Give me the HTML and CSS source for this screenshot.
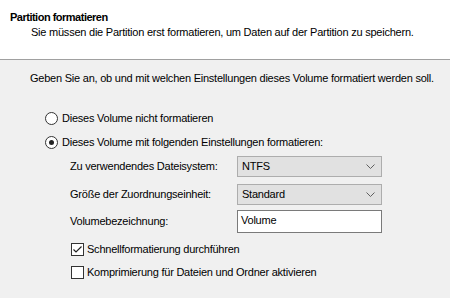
FILE: index.html
```html
<!DOCTYPE html>
<html lang="de">
<head>
<meta charset="UTF-8">
<title>Partition formatieren</title>
<link rel="stylesheet" href="styles.css">
</head>
<body>
<div class="header">
    <div class="title">Partition formatieren</div>
    <div class="subtitle">Sie müssen die Partition erst formatieren, um Daten auf der Partition zu speichern.</div>
</div>
<div class="page">
    <p class="intro">Geben Sie an, ob und mit welchen Einstellungen dieses Volume formatiert werden soll.</p>

    <div class="options">
        <label class="option">
            <span class="radio"></span>
            <span>Dieses Volume nicht formatieren</span>
        </label>
        <label class="option">
            <span class="radio checked"></span>
            <span>Dieses Volume mit folgenden Einstellungen formatieren:</span>
        </label>
    </div>

    <div class="settings">
        <div class="field">
            <span class="label">Zu verwendendes Dateisystem:</span>
            <div class="combo">
                <span>NTFS</span>
                <svg width="9" height="5" viewBox="0 0 9 5"><path d="M0.5 0.5 L4.5 4.5 L8.5 0.5" fill="none" stroke="#606060" stroke-width="1"/></svg>
            </div>
        </div>
        <div class="field">
            <span class="label">Größe der Zuordnungseinheit:</span>
            <div class="combo">
                <span>Standard</span>
                <svg width="9" height="5" viewBox="0 0 9 5"><path d="M0.5 0.5 L4.5 4.5 L8.5 0.5" fill="none" stroke="#606060" stroke-width="1"/></svg>
            </div>
        </div>
        <div class="field">
            <span class="label">Volumebezeichnung:</span>
            <div class="textbox">Volume</div>
        </div>

        <div class="checks">
            <label class="check">
                <span class="box">
                    <svg width="11" height="11" viewBox="0 0 11 11"><path d="M1.5 5.5 L4 8 L9.5 2.5" fill="none" stroke="#222" stroke-width="1.2"/></svg>
                </span>
                <span>Schnellformatierung durchführen</span>
            </label>
            <label class="check">
                <span class="box"></span>
                <span>Komprimierung für Dateien und Ordner aktivieren</span>
            </label>
        </div>
    </div>
</div>
</body>
</html>
```

FILE: styles.css
```css
body {
    margin: 0;
    background-color: #f0f0f0;
    color: #000;
    font-family: "Liberation Sans", Arial, sans-serif;
    font-size: 11px;
    line-height: 13px;
    letter-spacing: -0.23px;
    white-space: nowrap;
}
.header {
    height: 60px;
    padding: 11px 0 0 10px;
    box-sizing: border-box;
    background: #fff;
    border-bottom: 1px solid #a0a0a0;
}
.title {
    font-weight: bold;
    letter-spacing: -0.5px;
}
.subtitle {
    margin-top: 2px;
    padding-left: 21px;
}
.page {
    padding: 12px 0 0 30px;
}
.intro {
    margin: 0;
}
.options {
    margin-top: 21px;
    padding-left: 15px;
}
.option {
    display: flex;
    align-items: center;
    height: 24px;
    gap: 4px;
}
.radio {
    position: relative;
    width: 11px;
    height: 11px;
    border: 1px solid #333;
    border-radius: 50%;
    background: #fff;
}
.radio.checked::after {
    content: "";
    position: absolute;
    left: 3px;
    top: 3px;
    width: 5px;
    height: 5px;
    border-radius: 50%;
    background: #222;
}
.settings {
    margin-top: 2px;
    padding-left: 40px;
    width: 312px;
}
.field {
    display: flex;
    align-items: center;
    justify-content: space-between;
    margin-bottom: 7px;
}
.field:nth-child(2) {
    margin-bottom: 5px;
}
.combo {
    display: flex;
    align-items: center;
    justify-content: space-between;
    width: 145px;
    height: 21px;
    box-sizing: border-box;
    padding: 0 6px 0 4px;
    background: #e1e1e1;
    border: 1px solid #adadad;
}
.textbox {
    width: 145px;
    height: 23px;
    box-sizing: border-box;
    padding: 3px 3px 0;
    background: #fff;
    border: 1px solid #7a7a7a;
}
.checks {
    margin-top: -2px;
    padding-left: 1px;
}
.check {
    display: flex;
    align-items: center;
    height: 23px;
    gap: 3px;
}
.box {
    display: flex;
    align-items: center;
    justify-content: center;
    width: 11px;
    height: 11px;
    border: 1px solid #333;
    background: #fff;
}
```
